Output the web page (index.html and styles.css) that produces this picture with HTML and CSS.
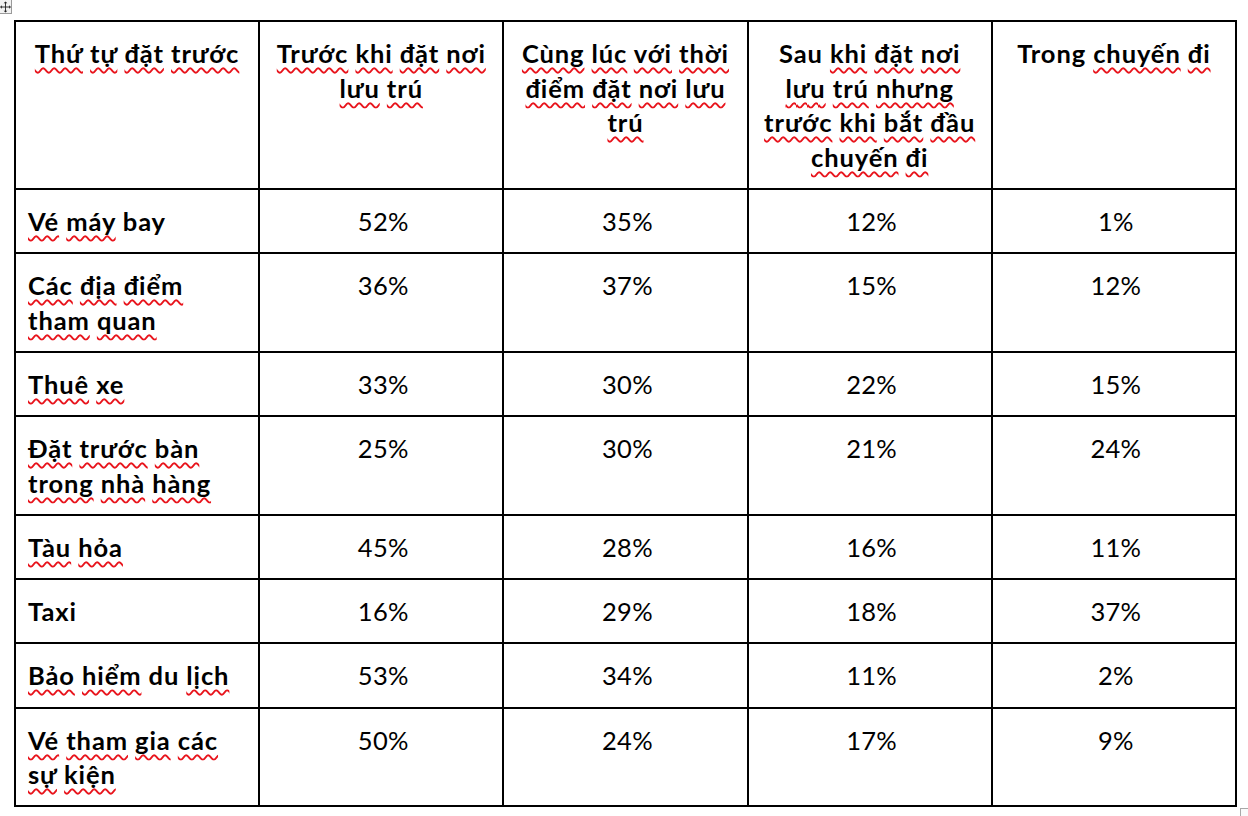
FILE: index.html
```html
<!DOCTYPE html>
<html lang="vi">
<head>
<meta charset="utf-8">
<title>Thứ tự đặt trước</title>
<link rel="stylesheet" href="styles.css">
</head>
<body>
<div class="page">
  <span class="move-handle">
    <svg width="12" height="12" viewBox="0 0 12 12">
      <path d="M6 1.5v9M1.5 6h9" stroke="#222" stroke-width="1" fill="none"/>
      <path d="M6 0l-2 2h4zM6 12l-2-2h4zM12 6l-2-2v4zM0 6l2-2v4z" fill="#222"/>
    </svg>
  </span>
  <table class="grid">
    <colgroup>
      <col class="c"><col class="c"><col class="c"><col class="c"><col class="c">
    </colgroup>
    <thead>
      <tr>
        <th><span class="sp">Thứ</span> <span class="sp">tự</span> <span class="sp">đặt</span> <span class="sp">trước</span></th>
        <th><span class="sp">Trước</span> <span class="sp">khi</span> <span class="sp">đặt</span> <span class="sp">nơi</span><br><span class="sp">lưu</span> <span class="sp">trú</span></th>
        <th><span class="sp">Cùng</span> <span class="sp">lúc</span> <span class="sp">với</span> <span class="sp">thời</span><br><span class="sp">điểm</span> <span class="sp">đặt</span> <span class="sp">nơi</span> <span class="sp">lưu</span><br><span class="sp">trú</span></th>
        <th>Sau <span class="sp">khi</span> <span class="sp">đặt</span> <span class="sp">nơi</span><br><span class="sp">lưu</span> <span class="sp">trú</span> <span class="sp">nhưng</span><br><span class="sp">trước</span> <span class="sp">khi</span> <span class="sp">bắt</span> <span class="sp">đầu</span><br><span class="sp">chuyến</span> <span class="sp">đi</span></th>
        <th>Trong <span class="sp">chuyến</span> <span class="sp">đi</span></th>
      </tr>
    </thead>
    <tbody>
      <tr>
        <td class="label"><span class="sp">Vé</span> <span class="sp">máy</span> bay</td>
        <td>52%</td><td>35%</td><td>12%</td><td>1%</td>
      </tr>
      <tr>
        <td class="label"><span class="sp">Các</span> <span class="sp">địa</span> <span class="sp">điểm</span><br><span class="sp">tham</span> <span class="sp">quan</span></td>
        <td>36%</td><td>37%</td><td>15%</td><td>12%</td>
      </tr>
      <tr>
        <td class="label"><span class="sp">Thuê</span> <span class="sp">xe</span></td>
        <td>33%</td><td>30%</td><td>22%</td><td>15%</td>
      </tr>
      <tr>
        <td class="label"><span class="sp">Đặt</span> <span class="sp">trước</span> <span class="sp">bàn</span><br><span class="sp">trong</span> <span class="sp">nhà</span> <span class="sp">hàng</span></td>
        <td>25%</td><td>30%</td><td>21%</td><td>24%</td>
      </tr>
      <tr>
        <td class="label"><span class="sp">Tàu</span> <span class="sp">hỏa</span></td>
        <td>45%</td><td>28%</td><td>16%</td><td>11%</td>
      </tr>
      <tr>
        <td class="label">Taxi</td>
        <td>16%</td><td>29%</td><td>18%</td><td>37%</td>
      </tr>
      <tr>
        <td class="label"><span class="sp">Bảo</span> <span class="sp">hiểm</span> du <span class="sp">lịch</span></td>
        <td>53%</td><td>34%</td><td>11%</td><td>2%</td>
      </tr>
      <tr>
        <td class="label"><span class="sp">Vé</span> <span class="sp">tham</span> <span class="sp">gia</span> <span class="sp">các</span><br><span class="sp">sự</span> <span class="sp">kiện</span></td>
        <td>50%</td><td>24%</td><td>17%</td><td>9%</td>
      </tr>
    </tbody>
  </table>
  <span class="resize-handle"></span>
</div>
</body>
</html>
```
FILE: styles.css
```css
html, body {
  margin: 0;
  padding: 0;
  background: #fff;
}
.page {
  position: relative;
  width: 1248px;
  height: 816px;
  padding: 20px 0 0 14px;
  box-sizing: border-box;
  font-family: Lato, "Liberation Sans", sans-serif;
  color: #000;
}
.move-handle {
  position: absolute;
  left: -1px;
  top: -1px;
  width: 11px;
  height: 13px;
  border: 1px solid #9a9a9a;
  background: #f2f2f2;
  display: flex;
  align-items: center;
  justify-content: center;
}
.resize-handle {
  position: absolute;
  left: 1240px;
  top: 808px;
  width: 10px;
  height: 10px;
  border: 1px solid #a8a8a8;
  background: #fafafa;
}
.grid {
  border-collapse: collapse;
  table-layout: fixed;
  width: 1223px;
}
.grid col.c {
  width: 20%;
}
.grid th,
.grid td {
  border: 2px solid #000;
  vertical-align: top;
  padding: 14px 8px 13.75px 12px;
  font-size: 25.5px;
  line-height: 34.5px;
  text-align: center;
}
.grid th {
  font-weight: 700;
  letter-spacing: 0.9px;
  padding-left: 8px;
}
.grid td {
  font-weight: 400;
  letter-spacing: 0.3px;
}
.grid td.label {
  text-align: left;
  font-weight: 700;
  letter-spacing: 0.9px;
}
.sp {
  text-decoration-line: underline;
  text-decoration-style: wavy;
  text-decoration-color: #e8141c;
  text-decoration-thickness: 1.6px;
  text-underline-offset: 4px;
  text-decoration-skip-ink: none;
}
```
